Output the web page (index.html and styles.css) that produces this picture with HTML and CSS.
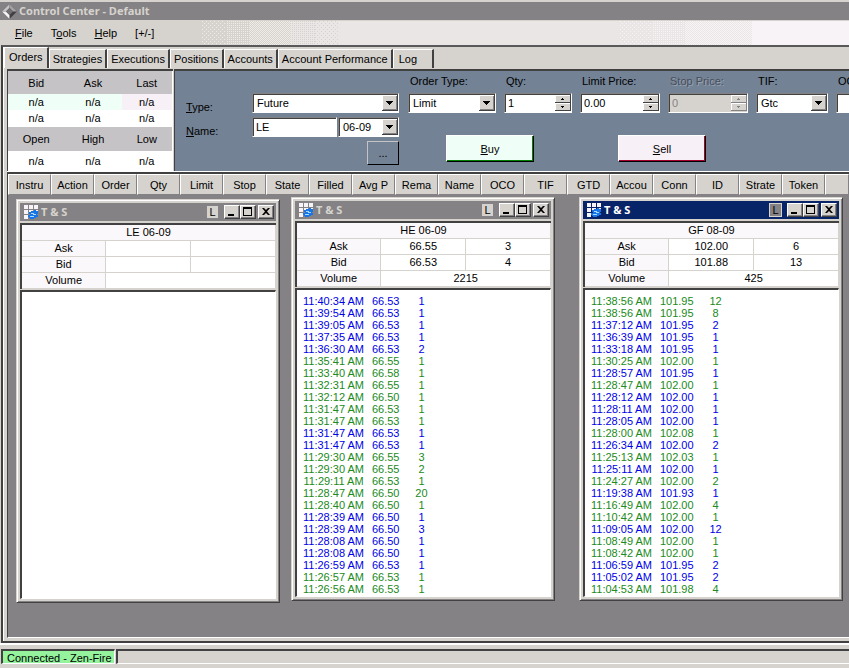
FILE: index.html
```html
<!DOCTYPE html>
<html lang="en">
<head>
    <meta charset="UTF-8">
    <meta name="viewport" content="width=device-width, initial-scale=1.0">
    <title>Control Center - Default</title>
    <link rel="stylesheet" href="styles.css">
</head>
<body>
    <div class="app">
        <header class="titlebar">
            <svg class="logo" viewBox="0 0 15 15">
                <path d="M7.5 0L15 7.5 7.5 15 0 7.5z" fill="#424142"/>
                <path d="M7.5 0v4L4 7.500H0z" fill="#c6c3c6"/>
                <path d="M7.5 0L15 7.5H11L7.5 4z" fill="#a5a2a5"/>
                <path d="M0 7.5h4L7.5 11v4z" fill="#f7f3f7"/>
                <path d="M7.5 4L11 7.5 7.5 11 4 7.5z" fill="#737173"/>
            </svg>
            <h1>Control Center - Default</h1>
        </header>

        <nav class="menubar">
            <div class="menu">
                <button><u>F</u>ile</button>
                <button>T<u>o</u>ols</button>
                <button><u>H</u>elp</button>
                <button>[+/-]</button>
            </div>
            <div class="shade">
                <span class="band sparse"></span>
                <span class="band dots"></span>
                <span class="band checker"></span>
                <span class="band dots inverse"></span>
                <span class="band sparse inverse"></span>
                <span class="band plain"></span>
                <span class="band sparse light"></span>
                <span class="band dots light"></span>
                <span class="band checker light"></span>
                <span class="band end"></span>
            </div>
        </nav>

        <main class="frame">
            <div class="tabs">
                <button class="tab active">Orders</button>
                <button class="tab">Strategies</button>
                <button class="tab">Executions</button>
                <button class="tab">Positions</button>
                <button class="tab">Accounts</button>
                <button class="tab">Account Performance</button>
                <button class="tab log">Log</button>
            </div>

            <div class="page">
                <div class="order-bar">
                    <table class="quote">
                        <tr class="quote-head"><th>Bid</th><th>Ask</th><th>Last</th></tr>
                        <tr><td class="bid">n/a</td><td class="bid">n/a</td><td class="last">n/a</td></tr>
                        <tr><td>n/a</td><td>n/a</td><td>n/a</td></tr>
                        <tr class="quote-head"><th>Open</th><th>High</th><th>Low</th></tr>
                        <tr class="tall"><td>n/a</td><td>n/a</td><td>n/a</td></tr>
                    </table>

                    <form class="entry" onsubmit="return false">
                        <div class="instrument">
                            <label for="type"><u>T</u>ype:</label>
                            <select id="type" class="field"><option>Future</option></select>
                            <label for="name"><u>N</u>ame:</label>
                            <div class="name-row">
                                <input id="name" class="field" type="text" value="LE">
                                <select id="expiry" class="field" aria-label="Expiry"><option>06-09</option></select>
                            </div>
                            <button class="more" type="button">...</button>
                        </div>
                        <div class="order">
                            <div class="order-fields">
                                <div class="col w-order">
                                    <label for="orderType">Order Type:</label>
                                    <select id="orderType" class="field"><option>Limit</option></select>
                                </div>
                                <div class="col w-qty">
                                    <label for="qty">Qty:</label>
                                    <input id="qty" class="field spin" type="text" value="1">
                                </div>
                                <div class="col w-price">
                                    <label for="limitPrice">Limit Price:</label>
                                    <input id="limitPrice" class="field spin" type="text" value="0.00">
                                </div>
                                <div class="col w-price">
                                    <label for="stopPrice" class="off">Stop Price:</label>
                                    <input id="stopPrice" class="field spin" type="text" value="0" disabled>
                                </div>
                                <div class="col w-tif">
                                    <label for="tif">TIF:</label>
                                    <select id="tif" class="field"><option>Gtc</option></select>
                                </div>
                                <div class="col w-price">
                                    <label for="oco">OCO:</label>
                                    <input id="oco" class="field" type="text">
                                </div>
                            </div>
                            <div class="order-buttons">
                                <button class="buy" type="button"><u>B</u>uy</button>
                                <button class="sell" type="button"><u>S</u>ell</button>
                            </div>
                        </div>
                    </form>
                </div>

                <table class="orders">
                    <tr>
                        <th>Instru</th><th>Action</th><th>Order</th><th>Qty</th><th>Limit</th><th>Stop</th><th>State</th>
                        <th>Filled</th><th>Avg P</th><th>Rema</th><th>Name</th><th>OCO</th><th>TIF</th><th>GTD</th>
                        <th>Accou</th><th>Conn</th><th>ID</th><th>Strate</th><th>Token</th><th class="rest"></th>
                    </tr>
                </table>

                <div class="workspace" id="workspace"></div>
            </div>
        </main>

        <footer class="statusbar">
            <span class="connected">Connected - Zen-Fire</span>
            <span class="status-rest"></span>
        </footer>
    </div>

    <script>
        // Each trade is "time price qty side", side is b (blue) or g (green)
        const windows = [
            { id: 'le', title: 'LE 06-09', ask: ['', ''], bid: ['', ''], volume: '', trades: [] },
            { id: 'he', title: 'HE 06-09', ask: ['66.55', '3'], bid: ['66.53', '4'], volume: '2215', trades: [
                '11:40:34 66.53 1 b', '11:39:54 66.53 1 b', '11:39:05 66.53 1 b', '11:37:35 66.53 1 b',
                '11:36:30 66.53 2 b', '11:35:41 66.55 1 g', '11:33:40 66.58 1 g', '11:32:31 66.55 1 g',
                '11:32:12 66.50 1 g', '11:31:47 66.53 1 g', '11:31:47 66.53 1 g', '11:31:47 66.53 1 b',
                '11:31:47 66.53 1 b', '11:29:30 66.55 3 g', '11:29:30 66.55 2 g', '11:29:11 66.53 1 g',
                '11:28:47 66.50 20 g', '11:28:40 66.50 1 g', '11:28:39 66.50 1 b', '11:28:39 66.50 3 b',
                '11:28:08 66.50 1 b', '11:28:08 66.50 1 b', '11:26:59 66.53 1 b', '11:26:57 66.53 1 g',
                '11:26:56 66.53 1 g'
            ] },
            { id: 'gf', title: 'GF 08-09', ask: ['102.00', '6'], bid: ['101.88', '13'], volume: '425', active: true, trades: [
                '11:38:56 101.95 12 g', '11:38:56 101.95 8 g', '11:37:12 101.95 2 b', '11:36:39 101.95 1 b',
                '11:33:18 101.95 1 b', '11:30:25 102.00 1 g', '11:28:57 101.95 1 b', '11:28:47 102.00 1 g',
                '11:28:12 102.00 1 b', '11:28:11 102.00 1 b', '11:28:05 102.00 1 b', '11:28:00 102.08 1 g',
                '11:26:34 102.00 2 b', '11:25:13 102.03 1 g', '11:25:11 102.00 1 b', '11:24:27 102.00 2 g',
                '11:19:38 101.93 1 b', '11:16:49 102.00 4 g', '11:10:42 102.00 1 g', '11:09:05 102.00 12 b',
                '11:08:49 102.00 1 g', '11:08:42 102.00 1 g', '11:06:59 101.95 2 b', '11:05:02 101.95 2 b',
                '11:04:53 101.98 4 g'
            ] }
        ];

        const icon = `<svg class="icon" viewBox="0 0 14 14">
            <path d="M0 0h4v4H0zM5 0h4v4H5zM10 0h4v4h-4zM0 5h4v4H0zM5 5h4v4H5zM10 5h4v4h-4zM0 10h4v4H0z" fill="#f7f3f7"/>
            <path d="M5 7h2V6h3V5h2v1h2v3h-1v1h1v2h-2v1h-2v1H6v-1H5v-1H4v-2h2V9H5z" fill="#1875e7"/>
            <path d="M7 8h3v1H7zM6 11h4v1H6zM9 9h3v1H9z" fill="#a5dbff"/>
        </svg>`;

        function tradeRow(trade) {
            const [time, price, qty, side] = trade.split(' ');
            return `<tr class="${side === 'b' ? 'blue' : 'green'}"><td>${time} AM</td><td>${price}</td><td>${qty}</td></tr>`;
        }

        document.getElementById('workspace').innerHTML = windows.map(w => `
            <section class="window ${w.id} ${w.active ? 'active' : ''}">
                <div class="window-title">
                    ${icon}
                    <h2>T &amp; S</h2>
                    <button class="link">L</button>
                    <button class="win-btn" aria-label="Minimize"><svg viewBox="0 0 12 10"><path d="M2 7h6v2H2z"/></svg></button>
                    <button class="win-btn" aria-label="Maximize"><svg viewBox="0 0 12 10"><path d="M1 0h9v9H1zM2 2v6h7V2z" fill-rule="evenodd"/></svg></button>
                    <button class="win-btn close" aria-label="Close"><svg viewBox="0 0 12 10"><path d="M2 1h2l2 2 2-2h2L7 4.500l3 3.500H8L6 6 4 8H2l3-3.500z"/></svg></button>
                </div>
                <table class="summary">
                    <tr><th colspan="3">${w.title}</th></tr>
                    <tr><th>Ask</th><td>${w.ask[0]}</td><td>${w.ask[1]}</td></tr>
                    <tr><th>Bid</th><td>${w.bid[0]}</td><td>${w.bid[1]}</td></tr>
                    <tr><th>Volume</th><td colspan="2">${w.volume}</td></tr>
                </table>
                <div class="trades"><table>${w.trades.map(tradeRow).join('')}</table></div>
            </section>`).join('');
    </script>
</body>
</html>
```
FILE: styles.css
```css
* {
    box-sizing: border-box;
}
body {
    margin: 0;
    background: #d6d3ce;
    color: #000;
    font: 11px/12px "Liberation Sans", Arial, sans-serif;
}
button, input, select {
    font: inherit;
    color: inherit;
    margin: 0;
}
button {
    padding: 0;
    border: none;
    background: #d6d3ce;
    white-space: nowrap;
}
table {
    border-collapse: collapse;
    border-spacing: 0;
}
th, td {
    padding: 0;
    font-weight: normal;
    text-align: center;
}
h1, h2 {
    margin: 0;
    font: bold 11px/16px "Noto Sans", Tahoma, sans-serif;
}
.app {
    display: flex;
    flex-direction: column;
    height: 100vh;
    overflow: hidden;
}

/* title and menu */
.titlebar {
    display: flex;
    align-items: center;
    gap: 2px;
    height: 20px;
    padding: 0 2px;
    border-top: 2px solid #d6d3ce;
    background: #848284;
    color: #d6d3ce;
    flex: none;
}
.logo {
    width: 15px;
    height: 15px;
}
.menubar {
    display: flex;
    height: 25px;
    padding-top: 1px;
    flex: none;
}
.menu {
    display: flex;
    gap: 18px;
    width: 202px;
    padding-left: 15px;
}
.shade {
    display: flex;
    flex: 1;
}
.band {
    flex: 24;
    background-color: #d6d3ce;
    --dot: #efebe7;
}
.sparse {
    background-image: conic-gradient(at 1px 1px, transparent 75%, var(--dot) 0), conic-gradient(at 1px 1px, transparent 75%, var(--dot) 0);
    background-size: 4px 4px;
    background-position: 0 0, 2px 2px;
}
.dots {
    background-image: conic-gradient(var(--dot) 25%, transparent 0);
    background-size: 2px 2px;
}
.checker {
    flex: 42;
    background-image: conic-gradient(var(--dot) 25%, transparent 0 50%, var(--dot) 0 75%, transparent 0);
    background-size: 2px 2px;
}
.inverse {
    background-color: #e9e6e5;
    --dot: #d6d3ce;
}
.plain {
    flex: 284;
    background: #e9e6e5;
}
.light {
    flex: 33;
    background-color: #e9e6e5;
    --dot: #f7f3f7;
}
.checker.light {
    flex: 68;
}
.end {
    flex: 98;
    background: #f7f3f7;
}

/* tab frame */
.frame {
    display: flex;
    flex-direction: column;
    flex: 1;
    min-height: 0;
    margin-left: 1px;
    border: solid #424142;
    border-width: 2px 0 2px 2px;
    border-top-color: #5a595a;
}
.tabs {
    display: flex;
    align-items: flex-end;
    height: 21px;
    flex: none;
    border-left: 1px solid #fff;
}
.tab {
    height: 19px;
    padding: 0 3px;
    border: solid #fff;
    border-width: 1px 2px 0 1px;
    border-right-color: #424142;
}
.tab.active {
    height: 21px;
    padding: 0 4px 2px;
}
.tab.log {
    padding: 0 15px 0 5px;
}
.page {
    display: flex;
    flex-direction: column;
    flex: 1;
    min-height: 0;
    padding: 1px 0 3px 3px;
    border-left: 1px solid #fff;
}
.order-bar {
    display: flex;
    height: 103px;
    flex: none;
    border-bottom: 1px solid #fff;
}
.quote {
    width: 166px;
    table-layout: fixed;
    border: 1px solid #424142;
    border-top-width: 2px;
    border-right: 1px solid #fff;
    border-bottom: none;
    background: #fff;
}
.quote th:first-child, .quote th:nth-child(2) {
    width: 57px;
}
.quote tr {
    height: 16px;
}
.quote .quote-head {
    height: 24px;
    background: #c6c3c6;
}
.quote .tall {
    height: 20px;
}
.bid {
    background: #effff7;
}
.last {
    background: #f7f0f7;
}
.entry {
    display: flex;
    flex: 1;
    min-width: 0;
    overflow: hidden;
    margin-left: 1px;
    padding-left: 11px;
    border: solid #424142;
    border-width: 2px 0 0 1px;
    background: #738294;
}
.instrument {
    display: grid;
    grid-template-columns: 66px 147px;
    grid-auto-rows: 20px;
    row-gap: 4px;
    padding-top: 22px;
    flex: none;
}
.instrument label {
    align-self: center;
    padding-top: 8px;
}
.name-row {
    display: flex;
    gap: 1px;
}
.name-row input {
    width: 85px;
}
.name-row select {
    flex: 1;
}
.more {
    grid-column: 2;
    justify-self: end;
    width: 32px;
    height: 24px;
    background: #738294;
    border: 1px solid #000;
    border-top-color: #c6c3c6;
    border-left-color: #c6c3c6;
}
.field {
    width: 100%;
    height: 20px;
    min-width: 0;
    padding: 0 3px;
    border: 1px solid #fff;
    border-top-color: #848284;
    border-left-color: #848284;
    border-radius: 0;
    background: #fff;
    box-shadow: inset 1px 1px #424142;
    outline: none;
    appearance: none;
}
select.field {
    padding: 0 17px 0 4px;
    background: #fff url("data:image/svg+xml,%3Csvg xmlns='http://www.w3.org/2000/svg' width='16' height='16' shape-rendering='crispEdges'%3E%3Cpath fill='%23424142' d='M0 0h16v16H0z'/%3E%3Cpath fill='%23fff' d='M0 0h15v15H0z'/%3E%3Cpath fill='%23848284' d='M1 1h14v14H1z'/%3E%3Cpath fill='%23d6d3ce' d='M1 1h13v13H1z'/%3E%3Cpath d='M4 6h7v1H4zM5 7h5v1H5zM6 8h3v1H6zM7 9h1v1H7z'/%3E%3C/svg%3E") no-repeat right 1px;
}
.spin {
    background: #fff url("data:image/svg+xml,%3Csvg xmlns='http://www.w3.org/2000/svg' width='16' height='16' shape-rendering='crispEdges'%3E%3Cpath fill='%23424142' d='M0 0h16v16H0z'/%3E%3Cpath fill='%23fff' d='M0 0h15v7H0zM0 8h15v7H0z'/%3E%3Cpath fill='%23d6d3ce' d='M1 1h14v6H1zM1 9h14v6H1z'/%3E%3Cpath d='M7 3h1v1H7zM6 4h3v1H6zM6 11h3v1H6zM7 12h1v1H7z'/%3E%3C/svg%3E") no-repeat right 1px;
}
.spin:disabled {
    color: #848284;
    background-color: #d6d3ce;
    background-image: url("data:image/svg+xml,%3Csvg xmlns='http://www.w3.org/2000/svg' width='16' height='16' shape-rendering='crispEdges'%3E%3Cpath fill='%23848284' d='M0 0h16v16H0z'/%3E%3Cpath fill='%23fff' d='M0 0h15v7H0zM0 8h15v7H0z'/%3E%3Cpath fill='%23d6d3ce' d='M1 1h14v6H1zM1 9h14v6H1z'/%3E%3Cpath fill='%23848284' d='M7 3h1v1H7zM6 4h3v1H6zM6 11h3v1H6zM7 12h1v1H7z'/%3E%3C/svg%3E");
}
.order {
    padding: 4px 0 0 9px;
    flex: none;
}
.order-fields {
    display: flex;
    gap: 8px;
}
.col {
    display: flex;
    flex-direction: column;
    gap: 6px;
}
.col label {
    padding-left: 2px;
}
.col .off {
    color: #4a4d5a;
    text-shadow: 1px 1px #94a2b5;
}
.w-order {
    width: 88px;
}
.w-qty {
    width: 68px;
}
.w-price {
    width: 80px;
}
.w-tif {
    width: 72px;
}
.order-buttons {
    display: flex;
    gap: 84px;
    padding: 22px 0 0 38px;
}
.buy, .sell {
    width: 88px;
    height: 27px;
    border: 1px solid #000;
    border-top-color: #fff;
    border-left-color: #fff;
}
.buy {
    background: #effff7;
    box-shadow: inset -1px -1px #008200;
}
.sell {
    background: #f7f0f7;
    box-shadow: inset -1px -1px #a50031;
}

/* orders grid header */
.orders {
    width: 100%;
    table-layout: fixed;
    border-collapse: separate;
    flex: none;
    border-top: 2px solid #424142;
    border-left: 1px solid #424142;
}
.orders th {
    width: 43px;
    height: 21px;
    overflow: hidden;
    white-space: nowrap;
    border: 1px solid #fff;
    border-right-color: #848284;
    border-bottom-color: #848284;
    background: #d6d3ce;
}
.orders .rest {
    width: auto;
}

/* workspace windows */
.workspace {
    position: relative;
    flex: 1;
    overflow: hidden;
    background: #848284;
    border-left: 1px solid #424142;
    border-bottom: 1px solid #fff;
}
.window {
    position: absolute;
    display: flex;
    flex-direction: column;
    width: 264px;
    height: 404px;
    padding: 3px;
    border: 1px solid #424142;
    border-top-color: #d6d3ce;
    border-left-color: #d6d3ce;
    background: #d6d3ce;
    box-shadow: inset 1px 1px #fff, inset -1px -1px #848284;
}
.le {
    left: 8px;
    top: 4px;
}
.he {
    left: 283px;
    top: 2px;
}
.gf {
    left: 571px;
    top: 2px;
}
.window-title {
    display: flex;
    align-items: center;
    height: 18px;
    margin-bottom: 2px;
    padding: 0 2px 0 4px;
    background: #848284;
    color: #d6d3ce;
    flex: none;
}
.active .window-title {
    background: #082468;
    color: #fff;
}
.icon {
    width: 14px;
    height: 14px;
    margin-right: 3px;
}
.window-title h2 {
    flex: 1;
}
.link {
    width: 11px;
    height: 12px;
    margin-right: 6px;
    color: #000;
}
.active .link {
    background: #848284;
    box-shadow: 0 0 0 1px #d6d3ce;
}
.win-btn {
    display: flex;
    width: 16px;
    height: 14px;
    padding: 1px;
    border: 1px solid #424142;
    border-top-color: #fff;
    border-left-color: #fff;
    box-shadow: inset -1px -1px #848284;
}
.win-btn svg {
    width: 12px;
    height: 10px;
}
.win-btn.close {
    margin-left: 2px;
}
.summary {
    width: 100%;
    table-layout: fixed;
    border: solid #424142;
    border-width: 2px 1px 1px 2px;
    border-right-color: #fff;
    border-bottom-color: #fff;
    background: #fff;
    flex: none;
}
.summary th, .summary td {
    height: 16px;
    border: 1px solid #d6d3ce;
}
.summary th {
    background: #fbf8fb;
}
.trades {
    flex: 1;
    min-height: 0;
    overflow: hidden;
    margin-top: 1px;
    padding: 5px 0 0 4px;
    border: solid #fff;
    border-width: 2px 1px 1px 2px;
    border-top-color: #424142;
    border-left-color: #424142;
    background: #fff;
}
.trades tr {
    height: 12px;
}
.trades td {
    padding: 0 6px 0 2px;
}
.trades td:last-child {
    width: 36px;
}
.blue {
    color: #0000e7;
}
.green {
    color: #218a21;
}

/* status bar */
.statusbar {
    display: flex;
    gap: 1px;
    height: 25px;
    padding: 4px 0;
    border-top: 2px solid #fff;
    flex: none;
}
.connected, .status-rest {
    border: solid #424142;
    border-width: 2px 0 1px 2px;
    border-bottom-color: #fff;
}
.connected {
    margin-left: 1px;
    padding: 1px 2px 0 4px;
    border-right: 1px solid #fff;
    background: #94f39c;
}
.status-rest {
    flex: 1;
}
```
